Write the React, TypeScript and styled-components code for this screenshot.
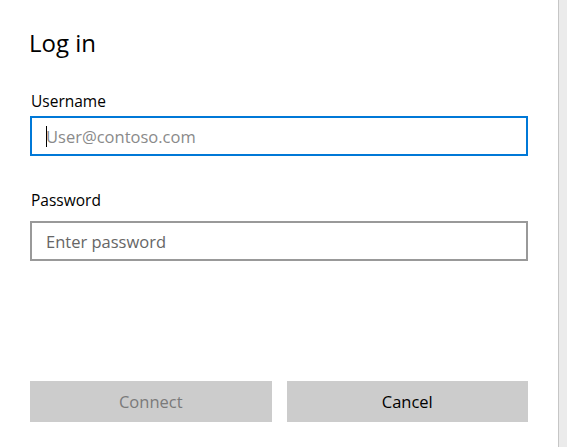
import { createGlobalStyle, styled } from 'styled-components';

const GlobalStyle = createGlobalStyle`
    html, body {
        margin: 0;
        padding: 0;
        background: #ffffff;
    }

    body {
        font-family: "Open Sans", "Noto Sans", sans-serif;
        color: #000000;
    }
`;

const Screen = styled.div`
    display: flex;
    height: 100vh;
    overflow: hidden;
`;

const Dialog = styled.div`
    width: 558px;
    box-sizing: border-box;
    padding: 26px 30px 0 30px;
    display: flex;
    flex-direction: column;
    background: #ffffff;
`;

const Backdrop = styled.div`
    flex: 1;
    background: #ebebeb;
    border-left: 1px solid #c6c6c6;
`;

const Title = styled.h1`
    margin: 0 0 0 -1px;
    font-size: 24px;
    font-weight: 400;
    line-height: 34px;
`;

const Field = styled.div<{ $top: number }>`
    display: flex;
    flex-direction: column;
    margin-top: ${({ $top }) => $top}px;
`;

const Label = styled.label<{ $gap: number }>`
    font-size: 15.5px;
    line-height: 20px;
    margin-bottom: ${({ $gap }) => $gap}px;
    margin-left: 1px;
`;

const InputWrap = styled.div`
    position: relative;
`;

const Input = styled.input<{ $focused?: boolean }>`
    display: block;
    width: 100%;
    height: 40px;
    box-sizing: border-box;
    margin: 0;
    padding: 0 0 0 14px;
    border: 2px solid ${({ $focused }) => ($focused ? '#0078d7' : '#999999')};
    border-radius: 0;
    outline: none;
    background: #ffffff;
    font-family: inherit;
    font-size: 16.5px;

    &::placeholder {
        color: ${({ $focused }) => ($focused ? '#8a8a8a' : '#666666')};
        opacity: 1;
    }
`;

const Caret = styled.span`
    position: absolute;
    left: 16px;
    top: 10px;
    width: 1px;
    height: 21px;
    background: #000000;
`;

const Actions = styled.div`
    margin-top: auto;
    margin-bottom: 25px;
    display: grid;
    grid-template-columns: 1fr 1fr;
    gap: 15px;
`;

const Button = styled.button`
    height: 41px;
    border: none;
    border-radius: 0;
    background: #cccccc;
    font-family: inherit;
    font-size: 16.5px;
    color: #000000;
    padding: 0;

    &:disabled {
        color: #7a7a7a;
    }
`;

export default function App() {
    return (
        <>
            <GlobalStyle />
            <Screen>
                <Dialog>
                    <Title>Log in</Title>
                    <Field $top={31}>
                        <Label htmlFor="username" $gap={5}>Username</Label>
                        <InputWrap>
                            <Input id="username" $focused placeholder="User@contoso.com" />
                            <Caret />
                        </InputWrap>
                    </Field>
                    <Field $top={34}>
                        <Label htmlFor="password" $gap={11}>Password</Label>
                        <Input id="password" type="password" placeholder="Enter password" />
                    </Field>
                    <Actions>
                        <Button disabled>Connect</Button>
                        <Button>Cancel</Button>
                    </Actions>
                </Dialog>
                <Backdrop />
            </Screen>
        </>
    );
}
